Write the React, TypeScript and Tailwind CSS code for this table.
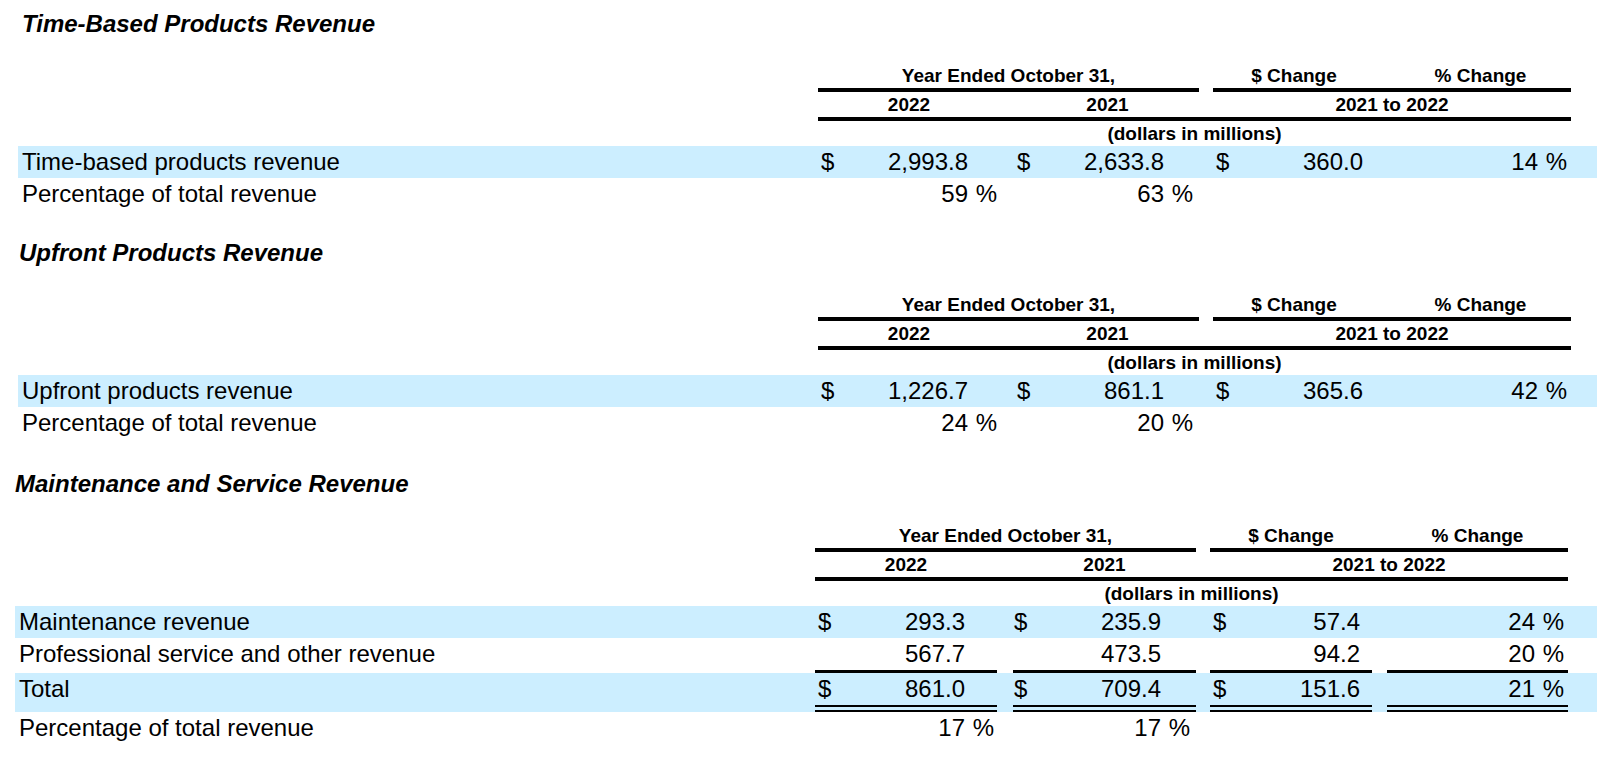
import React from 'react';

type Cell = { dollar?: boolean; value?: string; pct?: boolean };

interface RowData {
    label: string;
    shaded?: boolean;
    line?: 'single' | 'double';
    cells: [Cell, Cell, Cell, Cell];
}

interface SectionProps {
    title: string;
    titleClass: string;
    wrapClass: string;
    rows: RowData[];
}

const grid = 'grid grid-cols-[800px_182px_16px_183px_14px_162px_15px_181px]';

// padding for each of the four value columns, written out so Tailwind sees them
const colPad = ['pl-[3px] pr-[3px]', 'pl-[1px] pr-[6px]', 'pl-[3px] pr-[12px]', 'pl-[3px] pr-[4px]'];

const ValueCell: React.FC<{ cell: Cell; col: number; line?: 'single' | 'double' }> = ({ cell, col, line }) => {
    const border =
        line === 'single'
            ? 'border-b-[3px] border-black'
            : line === 'double'
            ? 'border-b-[7px] border-double border-black'
            : '';
    return (
        <div className={`flex items-start ${colPad[col]} ${border}`}>
            <span className="w-[16px]">{cell.dollar ? '$' : ''}</span>
            <span className="flex-1 text-right">{cell.value ?? ''}</span>
            {col !== 2 && <span className="w-[29px] text-right">{cell.pct ? '%' : ''}</span>}
        </div>
    );
};

const Gap: React.FC<{ line?: 'single' | 'double' }> = () => <div />;

const Section: React.FC<SectionProps> = ({ title, titleClass, wrapClass, rows }) => (
    <div className={wrapClass}>
        <h2 className={`text-[24px] leading-[28px] font-bold italic ${titleClass}`}>{title}</h2>

        <div className="mt-[26px] text-[19px] font-bold">
            {/* header row 1 */}
            <div className={`${grid} leading-[24px]`}>
                <div />
                <div className="col-span-3 text-center border-b-4 border-black">Year Ended October 31,</div>
                <div />
                <div className="text-center border-b-4 border-black">$ Change</div>
                <div className="border-b-4 border-black" />
                <div className="text-center border-b-4 border-black">% Change</div>
            </div>
            {/* header row 2 */}
            <div className={`${grid} leading-[25px]`}>
                <div />
                <div className="text-center border-b-4 border-black">2022</div>
                <div className="border-b-4 border-black" />
                <div className="text-center border-b-4 border-black">2021</div>
                <div className="border-b-4 border-black" />
                <div className="col-span-3 text-center border-b-4 border-black">2021 to 2022</div>
            </div>
            <div className={`${grid} leading-[25px]`}>
                <div />
                <div className="col-span-7 text-center">(dollars in millions)</div>
            </div>
        </div>

        <div className="text-[24px] leading-[32px]">
            {rows.map((r) => (
                <div key={r.label} className={`${grid} ${r.shaded ? 'bg-[#cceeff]' : ''}`}>
                    <div className="pl-[4px]">{r.label}</div>
                    <ValueCell cell={r.cells[0]} col={0} line={r.line} />
                    <Gap />
                    <ValueCell cell={r.cells[1]} col={1} line={r.line} />
                    <Gap />
                    <ValueCell cell={r.cells[2]} col={2} line={r.line} />
                    <Gap />
                    <ValueCell cell={r.cells[3]} col={3} line={r.line} />
                </div>
            ))}
        </div>
    </div>
);

const App: React.FC = () => {
    return (
        <div className="w-[1597px] h-[762px] bg-white text-black font-['Liberation_Sans',Arial,sans-serif] overflow-hidden pt-[10px]">
            <Section
                title="Time-Based Products Revenue"
                titleClass="pl-[4px]"
                wrapClass="pl-[18px]"
                rows={[
                    {
                        label: 'Time-based products revenue',
                        shaded: true,
                        cells: [
                            { dollar: true, value: '2,993.8' },
                            { dollar: true, value: '2,633.8' },
                            { dollar: true, value: '360.0' },
                            { value: '14', pct: true },
                        ],
                    },
                    {
                        label: 'Percentage of total revenue',
                        cells: [{ value: '59', pct: true }, { value: '63', pct: true }, {}, {}],
                    },
                ]}
            />
            <Section
                title="Upfront Products Revenue"
                titleClass="pl-[1px]"
                wrapClass="pl-[18px] mt-[29px]"
                rows={[
                    {
                        label: 'Upfront products revenue',
                        shaded: true,
                        cells: [
                            { dollar: true, value: '1,226.7' },
                            { dollar: true, value: '861.1' },
                            { dollar: true, value: '365.6' },
                            { value: '42', pct: true },
                        ],
                    },
                    {
                        label: 'Percentage of total revenue',
                        cells: [{ value: '24', pct: true }, { value: '20', pct: true }, {}, {}],
                    },
                ]}
            />
            <Section
                title="Maintenance and Service Revenue"
                titleClass="pl-0"
                wrapClass="pl-[15px] mt-[31px]"
                rows={[
                    {
                        label: 'Maintenance revenue',
                        shaded: true,
                        cells: [
                            { dollar: true, value: '293.3' },
                            { dollar: true, value: '235.9' },
                            { dollar: true, value: '57.4' },
                            { value: '24', pct: true },
                        ],
                    },
                    {
                        label: 'Professional service and other revenue',
                        line: 'single',
                        cells: [{ value: '567.7' }, { value: '473.5' }, { value: '94.2' }, { value: '20', pct: true }],
                    },
                    {
                        label: 'Total',
                        shaded: true,
                        line: 'double',
                        cells: [
                            { dollar: true, value: '861.0' },
                            { dollar: true, value: '709.4' },
                            { dollar: true, value: '151.6' },
                            { value: '21', pct: true },
                        ],
                    },
                    {
                        label: 'Percentage of total revenue',
                        cells: [{ value: '17', pct: true }, { value: '17', pct: true }, {}, {}],
                    },
                ]}
            />
        </div>
    );
};

export default App;
